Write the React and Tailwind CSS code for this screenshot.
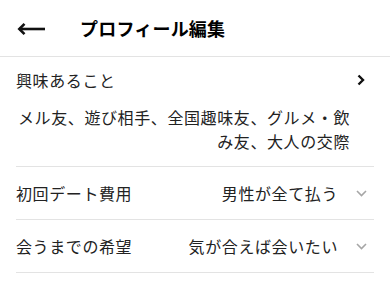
export default function App() {
  const rows = [
    { label: "初回デート費用", value: "男性が全て払う" },
    { label: "会うまでの希望", value: "気が合えば会いたい" },
  ];

  return (
    <div
      className="w-[390px] h-[290px] bg-white text-[#222] overflow-hidden"
      style={{ fontFamily: '"Noto Sans CJK JP", "Noto Sans", sans-serif' }}
    >
      <header className="h-[57px] flex items-center border-b border-[#e3e3e3]">
        <svg
          className="ml-[17px] mt-[1px]"
          width="29"
          height="14"
          viewBox="0 0 29 14"
          fill="none"
        >
          <path d="M2 7H28" stroke="#111" strokeWidth="2.6" />
          <path
            d="M7.5 1.8L2.3 7L7.5 12.2"
            stroke="#111"
            strokeWidth="2.6"
            strokeLinejoin="miter"
          />
        </svg>
        <h1 className="ml-[34px] text-[18px] font-bold text-black leading-none tracking-[0.2px]">
          プロフィール編集
        </h1>
      </header>

      <main className="px-4">
        <section className="pt-[12px] pb-[13px] border-b border-[#e3e3e3]">
          <div className="flex items-center justify-between h-[22px]">
            <span className="text-[16px] leading-[22px] tracking-[0.6px]">
              興味あること
            </span>
            <svg
              className="mr-[9px]"
              width="8"
              height="12"
              viewBox="0 0 8 12"
              fill="none"
            >
              <path
                d="M1.5 1.5L6 6L1.5 10.5"
                stroke="#111"
                strokeWidth="2.4"
              />
            </svg>
          </div>
          <p className="mt-[14px] pr-[24px] text-right text-[16px] leading-[24px] tracking-[0.6px]">
            メル友、遊び相手、全国趣味友、グルメ・飲み友、大人の交際
          </p>
        </section>

        {rows.map((row) => (
          <div
            key={row.label}
            className="h-[53px] flex items-center justify-between border-b border-[#e3e3e3]"
          >
            <span className="text-[16px] leading-[22px] tracking-[0.6px]">
              {row.label}
            </span>
            <div className="flex items-center">
              <span className="text-[16px] leading-[22px] tracking-[0.6px]">
                {row.value}
              </span>
              <svg
                className="ml-[18px] mr-[7px]"
                width="11"
                height="7"
                viewBox="0 0 11 7"
                fill="none"
              >
                <path
                  d="M1 1L5.5 5.5L10 1"
                  stroke="#a6a6a6"
                  strokeWidth="1.6"
                />
              </svg>
            </div>
          </div>
        ))}
      </main>
    </div>
  );
}
